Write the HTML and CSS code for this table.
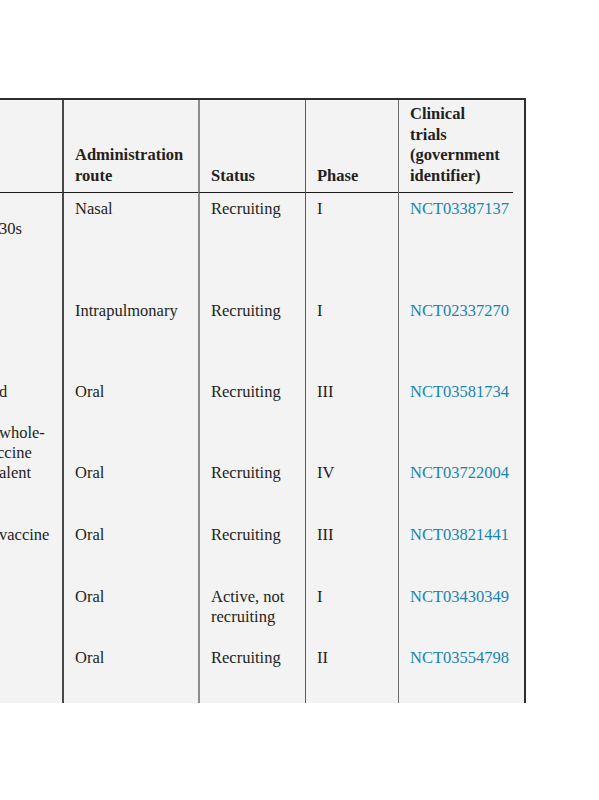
FILE: index.html
```html
<!DOCTYPE html>
<html lang="en">
<head>
<meta charset="utf-8">
<title>Clinical trials</title>
<link rel="stylesheet" href="styles.css">
</head>
<body>
<div class="panel">
  <div class="th c1"></div>
  <div class="th c2"><span>Administration<br>route</span></div>
  <div class="th c3"><span>Status</span></div>
  <div class="th c4"><span>Phase</span></div>
  <div class="th c5"><span>Clinical<br>trials<br>(government<br>identifier)</span></div>

  <div class="td c1"><span class="frag">&nbsp;<br>30s</span></div>
  <div class="td c2">Nasal</div>
  <div class="td c3">Recruiting</div>
  <div class="td c4">I</div>
  <div class="td c5"><a href="#">NCT03387137</a></div>

  <div class="td c1"></div>
  <div class="td c2">Intrapulmonary</div>
  <div class="td c3">Recruiting</div>
  <div class="td c4">I</div>
  <div class="td c5"><a href="#">NCT02337270</a></div>

  <div class="td c1 span2"><span class="frag">d<br>&nbsp;<br>whole-<br><span class="cut">ccine</span><br>alent</span></div>
  <div class="td c2">Oral</div>
  <div class="td c3">Recruiting</div>
  <div class="td c4">III</div>
  <div class="td c5"><a href="#">NCT03581734</a></div>

  <div class="td c2">Oral</div>
  <div class="td c3">Recruiting</div>
  <div class="td c4">IV</div>
  <div class="td c5"><a href="#">NCT03722004</a></div>

  <div class="td c1"><span class="frag">vaccine</span></div>
  <div class="td c2">Oral</div>
  <div class="td c3">Recruiting</div>
  <div class="td c4">III</div>
  <div class="td c5"><a href="#">NCT03821441</a></div>

  <div class="td c1"></div>
  <div class="td c2">Oral</div>
  <div class="td c3">Active, not<br>recruiting</div>
  <div class="td c4">I</div>
  <div class="td c5"><a href="#">NCT03430349</a></div>

  <div class="td c1"></div>
  <div class="td c2">Oral</div>
  <div class="td c3">Recruiting</div>
  <div class="td c4">II</div>
  <div class="td c5"><a href="#">NCT03554798</a></div>
</div>
</body>
</html>
```
FILE: styles.css
```css
html, body {
  margin: 0;
  padding: 0;
  background: #ffffff;
}

body {
  font-family: "Liberation Serif", "Times New Roman", serif;
  font-size: 16.5px;
  line-height: 20.3px;
  color: #231f20;
  overflow: hidden;
}

.panel {
  margin-top: 98px;
  width: 524px;
  background: #f3f3f3;
  border-top: 2px solid #2e2e2e;
  border-right: 2px solid #2e2e2e;
  display: grid;
  grid-template-columns: 62px 136px 107px 93px 126px;
  grid-template-rows: 93px 102px 81px 81px 62px 62px 61px 61px;
}

.th {
  font-weight: bold;
  line-height: 20.5px;
  padding: 0 0 5.8px 11px;
  border-bottom: 1px solid #1c1c1c;
  display: flex;
  flex-direction: column;
  justify-content: flex-end;
}

.th.c5 {
  border-bottom: 0;
  padding-bottom: 6.8px;
  background: linear-gradient(#1c1c1c, #1c1c1c) left bottom / calc(100% - 11px) 1px no-repeat;
}

.td {
  padding: 6px 0 0 11px;
}

.c1 {
  padding-left: 0;
}

.c2 {
  border-left: 2px solid #474747;
}

.c3 {
  border-left: 2px solid #8c8c8c;
}

.c4 {
  border-left: 1px solid #5a5a5a;
}

.c5 {
  border-left: 1px solid #6a6a6a;
}

.span2 {
  grid-row: span 2;
}

.frag {
  display: block;
  margin-left: -1px;
  white-space: nowrap;
}

.cut {
  margin-left: -2px;
}

a {
  color: #1784b2;
  text-decoration: none;
}
```
